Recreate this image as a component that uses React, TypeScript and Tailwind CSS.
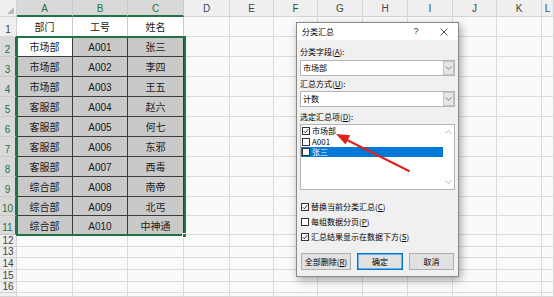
import React from 'react';

const COLS = ['A', 'B', 'C', 'D', 'E', 'F', 'G', 'H', 'I', 'J', 'K', 'L'];
const DATA: string[][] = [
  ['部门', '工号', '姓名'],
  ['市场部', 'A001', '张三'],
  ['市场部', 'A002', '李四'],
  ['市场部', 'A003', '王五'],
  ['客服部', 'A004', '赵六'],
  ['客服部', 'A005', '何七'],
  ['客服部', 'A006', '东邪'],
  ['客服部', 'A007', '西毒'],
  ['综合部', 'A008', '南帝'],
  ['综合部', 'A009', '北丐'],
  ['综合部', 'A010', '中神通'],
];
const ROWS = 17;

function HeaderCell({ label, selected }: { label: string; selected: boolean }) {
  return (
    <div
      className={
        selected
          ? 'flex items-end justify-center bg-[#d9d9d9] text-[#217346] border-r border-r-[#c8c8c8] border-b-2 border-b-[#217346] text-[10px] leading-none pb-[1px]'
          : 'flex items-end justify-center bg-[#efefef] text-[#444444] border-r border-b border-[#d4d4d4] text-[10px] leading-none pb-[2px]'
      }
    >
      {label}
    </div>
  );
}

function RowHeader({ n }: { n: number }) {
  const selected = n >= 2 && n <= 11;
  const tall = n <= 11;
  let cls = 'flex justify-center text-[10px] leading-none overflow-hidden ';
  if (selected) cls += 'bg-[#d9d9d9] text-[#217346] border-r-2 border-r-[#217346] border-b border-b-[#c8c8c8] ';
  else cls += 'bg-[#efefef] text-[#444444] border-r border-b border-[#d4d4d4] ';
  if (tall) cls += 'items-end pb-[1px]';
  else cls += 'items-center';
  return <div className={cls}>{n === 17 ? '' : n}</div>;
}

function Cell({ r, c }: { r: number; c: number }) {
  const inTable = r >= 1 && r <= 11 && c >= 1 && c <= 3;
  if (!inTable) {
    return <div className="bg-[#fafafa] border-r border-b border-[#dadada]" />;
  }
  const text = DATA[r - 1][c - 1];
  let cls = 'flex items-center justify-center pt-[3px] text-[10px] leading-none text-[#1a1a1a] border-r border-b ';
  if (r === 1) cls += 'bg-white border-[#c9c9c9]';
  else if (r === 2 && c === 1) cls += 'bg-white border-[#3c3c3c]';
  else cls += 'bg-[#c9c9c9] border-[#3c3c3c]';
  return <div className={cls}>{text}</div>;
}

function Sheet() {
  const cells: React.ReactNode[] = [];
  cells.push(
    <div key="corner" className="flex items-end justify-end bg-[#efefef] border-r border-b border-[#d4d4d4] pr-[2px] pb-[2px]">
      <svg width="7" height="7" viewBox="0 0 7 7">
        <polygon points="7,0 7,7 0,7" fill="#b9b9b9" />
      </svg>
    </div>
  );
  COLS.forEach((l, i) => cells.push(<HeaderCell key={'h' + l} label={l} selected={i <= 2} />));
  for (let r = 1; r <= ROWS; r++) {
    cells.push(<RowHeader key={'r' + r} n={r} />);
    for (let c = 1; c <= COLS.length; c++) {
      cells.push(<Cell key={r + '-' + c} r={r} c={c} />);
    }
  }
  return (
    <div className="grid grid-cols-[17px_56px_55px_56px_46px_44px_44px_45px_45px_45px_44px_45px_1fr] grid-rows-[17px_20px_20px_20px_20px_20px_20px_20px_20px_20px_19px_19px_12px_11px_12px_12px_11px_4px] w-[554px] h-[297px] overflow-hidden">
      {cells}
    </div>
  );
}

function CheckBox({ checked }: { checked?: boolean }) {
  return (
    <div className="w-[8px] h-[8px] shrink-0 bg-white border border-[#333333] flex items-center justify-center">
      {checked && (
        <svg width="6" height="6" viewBox="0 0 6 6">
          <path d="M0.6 3.1 L2.3 4.8 L5.4 1.0" fill="none" stroke="#222222" strokeWidth="0.9" />
        </svg>
      )}
    </div>
  );
}

function ChevronDown({ color }: { color: string }) {
  return (
    <svg width="7" height="4" viewBox="0 0 7 4">
      <path d="M0.5 0.5 L3.5 3.3 L6.5 0.5" fill="none" stroke={color} strokeWidth="0.8" />
    </svg>
  );
}

function ChevronUp() {
  return (
    <svg width="7" height="4" viewBox="0 0 7 4">
      <path d="M0.5 3.5 L3.5 0.7 L6.5 3.5" fill="none" stroke="#a0a0a0" strokeWidth="0.8" />
    </svg>
  );
}

function Combo({ value }: { value: string }) {
  return (
    <div className="h-[16px] bg-white border border-[#b5b5b5] flex items-center">
      <span className="flex-1 pl-[2px] leading-none">{value}</span>
      <div className="w-[11px] h-[14px] bg-[#e6e6e6] border border-[#c4c4c4] flex items-center justify-center">
        <ChevronDown color="#6a6a6a" />
      </div>
    </div>
  );
}

function ListItem({ label, checked, selected }: { label: string; checked?: boolean; selected?: boolean }) {
  return (
    <div
      className={
        selected
          ? 'h-[10px] flex items-center bg-[#0078d7] text-white'
          : 'h-[11px] flex items-center text-black'
      }
    >
      <div className="ml-[1px]">
        <CheckBox checked={checked} />
      </div>
      <span className="ml-[2px] leading-none">{label}</span>
    </div>
  );
}

function OptionRow({ children, checked }: { children: React.ReactNode; checked?: boolean }) {
  return (
    <div className="h-[11px] flex items-center">
      <div className="ml-[1px]">
        <CheckBox checked={checked} />
      </div>
      <span className="ml-[2px] leading-none">{children}</span>
    </div>
  );
}

function Dialog() {
  return (
    <div className="absolute left-[296px] top-[22px] w-[163px] h-[255px] border border-[#8a8a8a] bg-[#f0f0f0] shadow-[2px_3px_8px_rgba(0,0,0,0.35)] flex flex-col text-[8px] text-black font-['Noto_Sans_CJK_SC',sans-serif]">
      <div className="h-[17px] bg-white flex items-center pl-[5px] pr-[9px]">
        <span className="flex-1 leading-none">分类汇总</span>
        <span className="w-[10px] text-center text-[9px] leading-none text-[#333333] font-['Liberation_Sans',sans-serif]">?</span>
        <span className="w-[18px]" />
        <div className="w-[10px] flex items-center justify-center">
          <svg width="8" height="8" viewBox="0 0 8 8">
            <path d="M0.5 0.5 L7.5 7.5 M7.5 0.5 L0.5 7.5" stroke="#333333" strokeWidth="0.9" />
          </svg>
        </div>
      </div>
      <div className="flex-1 flex flex-col px-[3px] pt-[6px]">
        <div className="h-[11px] leading-[11px]">
          分类字段(<span className="underline">A</span>):
        </div>
        <div className="mt-[3px]">
          <Combo value="市场部" />
        </div>
        <div className="mt-[2px] h-[11px] leading-[11px]">
          汇总方式(<span className="underline">U</span>):
        </div>
        <div className="mt-[2px]">
          <Combo value="计数" />
        </div>
        <div className="mt-[4px] h-[11px] leading-[11px]">
          选定汇总项(<span className="underline">D</span>):
        </div>
        <div className="mt-[2px] h-[66px] bg-white border border-[#b5b5b5] flex">
          <div className="flex-1 flex flex-col">
            <ListItem label="市场部" checked />
            <ListItem label="A001" />
            <ListItem label="张三" selected />
          </div>
          <div className="w-[11px] flex flex-col justify-between items-center pt-[5px] pb-[5px]">
            <ChevronUp />
            <ChevronDown color="#a0a0a0" />
          </div>
        </div>
        <div className="mt-[11px]">
          <OptionRow checked>
            替换当前分类汇总(<span className="underline">C</span>)
          </OptionRow>
        </div>
        <div className="mt-[4px]">
          <OptionRow>
            每组数据分页(<span className="underline">P</span>)
          </OptionRow>
        </div>
        <div className="mt-[4px]">
          <OptionRow checked>
            汇总结果显示在数据下方(<span className="underline">S</span>)
          </OptionRow>
        </div>
        <div className="mt-[11px] flex gap-[6px] pl-[1px]">
          <div className="w-[50px] h-[17px] bg-[#e1e1e1] border border-[#adadad] flex items-center justify-center leading-none">
            全部删除(<span className="underline">R</span>)
          </div>
          <div className="w-[46px] h-[17px] bg-[#e1e1e1] border border-[#0078d7] shadow-[inset_0_0_0_0.5px_#0078d7] flex items-center justify-center leading-none">
            确定
          </div>
          <div className="w-[45px] h-[17px] bg-[#e1e1e1] border border-[#adadad] flex items-center justify-center leading-none">
            取消
          </div>
        </div>
      </div>
    </div>
  );
}

function Arrow() {
  return (
    <svg className="absolute left-0 top-0 pointer-events-none" width="554" height="297" viewBox="0 0 554 297">
      <line x1="409" y1="171" x2="346" y2="139.5" stroke="#e3211c" strokeWidth="2" strokeLinecap="round" />
      <polygon points="336,134 350.2,135.2 345.6,144.4" fill="#e3211c" />
    </svg>
  );
}

export default function App() {
  return (
    <div className="relative w-[554px] h-[297px] overflow-hidden bg-white font-['Liberation_Sans','Noto_Sans_CJK_SC',sans-serif]">
      <Sheet />
      <div className="absolute left-[16px] top-[36px] w-[170px] h-[200px] border-2 border-[#217346] pointer-events-none" />
      <div className="absolute left-[182px] top-[233px] w-[5px] h-[5px] bg-[#217346] border border-white" />
      <Dialog />
      <Arrow />
    </div>
  );
}
